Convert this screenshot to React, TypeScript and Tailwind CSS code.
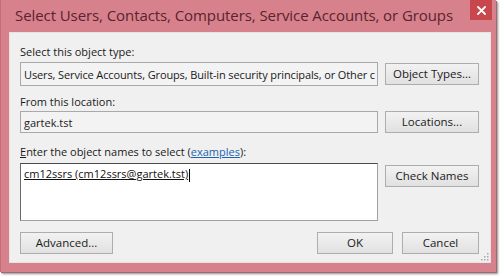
import React from "react";

const font = { fontFamily: '"Open Sans", "Noto Sans", sans-serif' };

function Btn({ w, children }: { w: string; children: React.ReactNode }) {
  return (
    <div
      className={`${w} h-[22px] flex items-center justify-center border border-[#adadad] bg-gradient-to-b from-[#f2f2f2] to-[#e1e1e1] text-[11.5px] text-[#1a1a1a] leading-none`}
    >
      {children}
    </div>
  );
}

export default function App() {
  return (
    <div className="w-[504px] h-[277px] bg-white overflow-hidden" style={font}>
      <div className="relative w-[496px] h-[272px] bg-[#d6818b] border-l border-[#c56e79] shadow-[1px_1px_0_#9a6b71,2px_2px_2px_rgba(0,0,0,0.45)] flex flex-col">
        <div className="h-[32px] flex items-center pl-[14px] pb-[1px]">
          <span className="text-[15px] text-[#5a2330] leading-none tracking-[-0.08px]">
            Select Users, Contacts, Computers, Service Accounts, or Groups
          </span>
        </div>
        <div className="absolute right-[4px] top-0 w-[22px] h-[20px] bg-[#c7474d] flex items-center justify-center">
          <svg width="9" height="9" viewBox="0 0 9 9">
            <path d="M1 1 L8 8 M8 1 L1 8" stroke="white" strokeWidth="1.8" strokeLinecap="square" />
          </svg>
        </div>
        <div className="ml-[8px] w-[482px] h-[231px] bg-[#f0f0f0] border border-[#e4e4e4] relative flex flex-col pl-[10px] pr-[11px]">
          <div className="mt-[11px] h-[14px] flex items-center text-[11px] text-[#1a1a1a] leading-none">
            Select this object type:
          </div>
          <div className="mt-[4px] flex items-center gap-[7px]">
            <div className="w-[358px] h-[24px] border border-[#a9a9a9] bg-[#f3f3f3] flex items-center pl-[3px] text-[11px] tracking-[-0.12px] text-[#1a1a1a] whitespace-nowrap overflow-hidden leading-none">
              Users, Service Accounts, Groups, Built-in security principals, or Other c
            </div>
            <Btn w="w-[94px]">Object Types...</Btn>
          </div>
          <div className="mt-[8px] h-[14px] flex items-center text-[11px] text-[#1a1a1a] leading-none">
            From this location:
          </div>
          <div className="mt-[3px] flex items-center gap-[7px]">
            <div className="w-[358px] h-[22px] border border-[#a9a9a9] bg-[#f3f3f3] flex items-center pl-[3px] text-[11px] text-[#1a1a1a] leading-none">
              gartek.tst
            </div>
            <Btn w="w-[94px]">Locations...</Btn>
          </div>
          <div className="mt-[11px] h-[14px] flex items-center text-[11px] text-[#1a1a1a] leading-none whitespace-pre">
            <span className="underline">E</span>nter the object names to select (<span className="underline text-[#1a64b4]">examples</span>):
          </div>
          <div className="mt-[5px] flex items-start gap-[7px]">
            <div className="w-[358px] h-[58px] border border-[#a0a0a0] border-t-[#4a4a4a] border-l-[#6a6a6a] bg-white pl-[3px] pt-[3px] text-[11px] text-[#111] leading-[14px]">
              <span className="underline">cm12ssrs (cm12ssrs@gartek.tst)</span>
              <span className="inline-block w-[1px] h-[13px] bg-black align-middle ml-[1px]" />
            </div>
            <div className="mt-[2px]">
              <Btn w="w-[94px]">Check Names</Btn>
            </div>
          </div>
          <div className="mt-[11px] flex items-center">
            <Btn w="w-[93px]">Advanced...</Btn>
            <div className="flex-1" />
            <Btn w="w-[76px]">OK</Btn>
            <div className="w-[9px]" />
            <Btn w="w-[77px]">Cancel</Btn>
          </div>
          <svg className="absolute right-[1px] bottom-[1px]" width="8" height="8" viewBox="0 0 8 8">
            <rect x="6" y="0" width="1.5" height="1.5" fill="#a8a8a8" />
            <rect x="3" y="3" width="1.5" height="1.5" fill="#a8a8a8" />
            <rect x="6" y="3" width="1.5" height="1.5" fill="#a8a8a8" />
            <rect x="0" y="6" width="1.5" height="1.5" fill="#a8a8a8" />
            <rect x="3" y="6" width="1.5" height="1.5" fill="#a8a8a8" />
            <rect x="6" y="6" width="1.5" height="1.5" fill="#a8a8a8" />
          </svg>
        </div>
      </div>
    </div>
  );
}
